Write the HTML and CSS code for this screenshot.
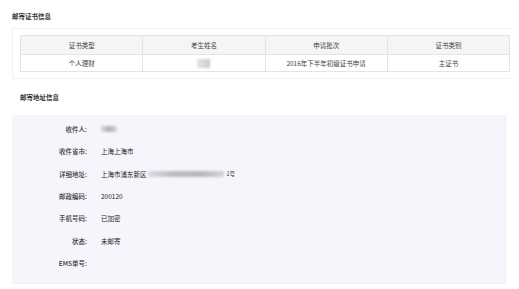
FILE: index.html
```html
<!DOCTYPE html>
<html>
<head>
    <title>邮寄信息</title>
    <link rel="stylesheet" href="styles.css">
</head>
<body>
    <div class="section-title first">邮寄证书信息</div>

    <div class="cert-box">
        <table class="cert-table">
            <tr>
                <th>证书类型</th>
                <th>考生姓名</th>
                <th>申请批次</th>
                <th>证书类别</th>
            </tr>
            <tr>
                <td>个人理财</td>
                <td><span class="blur name-blur"></span></td>
                <td>2016年下半年初级证书申请</td>
                <td>主证书</td>
            </tr>
        </table>
    </div>

    <div class="section-title second">邮寄地址信息</div>

    <div class="address-box">
        <div class="row"><span class="label">收件人:</span><span class="value"><span class="blur person-blur"></span></span></div>
        <div class="row"><span class="label">收件省市:</span><span class="value">上海上海市</span></div>
        <div class="row"><span class="label">详细地址:</span><span class="value">上海市浦东新区<span class="blur addr-blur"></span><span class="tail">1号</span></span></div>
        <div class="row"><span class="label">邮政编码:</span><span class="value">200120</span></div>
        <div class="row"><span class="label">手机号码:</span><span class="value">已加密</span></div>
        <div class="row"><span class="label">状态:</span><span class="value">未邮寄</span></div>
        <div class="row"><span class="label">EMS单号:</span><span class="value"></span></div>
    </div>
</body>
</html>
```

FILE: styles.css
```css
body {
    margin: 0;
    font-family: "Noto Sans CJK SC", "Noto Sans", sans-serif;
    font-size: 6.5px;
    color: #333;
    background: #fff;
}
.section-title {
    font-weight: bold;
    color: #333;
    height: 10px;
    line-height: 10px;
}
.section-title.first {
    margin: 11px 0 0 12px;
}
.section-title.second {
    margin: 13px 0 0 20px;
}
.cert-box {
    margin: 7px 9px 0 12px;
    padding: 6px 0 6px 7px;
    border: 1px solid #f0f0f0;
    border-right: none;
}
.cert-table {
    width: 100%;
    border-collapse: collapse;
    table-layout: fixed;
}
.cert-table th,
.cert-table td {
    border: 1px solid #e4e4e4;
    text-align: center;
    color: #444;
    font-weight: normal;
    padding: 0;
}
.cert-table th {
    background: #f5f5f5;
    height: 18px;
}
.cert-table td {
    height: 16px;
}
.blur {
    display: inline-block;
    vertical-align: middle;
    filter: blur(1px);
}
.name-blur {
    width: 13px;
    height: 9px;
    background: linear-gradient(90deg, #e6e6e6 0%, #d4d4d4 60%, #c8c8c8 100%);
}
.person-blur {
    width: 16px;
    height: 6px;
    background: linear-gradient(90deg, #dcdcdc 0%, #b0b0b0 50%, #d8d8d8 100%);
}
.addr-blur {
    width: 76px;
    height: 6px;
    margin-left: 1px;
    background: linear-gradient(90deg, #dcdce2 0%, #bdbdc3 30%, #b6b6bc 70%, #d4d4da 100%);
}
.tail {
    margin-left: 3px;
    font-size: 5.5px;
}
.address-box {
    margin: 13px 13px 0 12px;
    padding: 3px 0 9px 0;
    background: #f6f5fc;
    border-right: 1px solid #ececf2;
    border-bottom: 1px solid #f0f0f4;
}
.row {
    display: flex;
    align-items: center;
    height: 22.3px;
}
.label {
    width: 75px;
    text-align: right;
    color: #333;
    font-weight: 500;
}
.value {
    margin-left: 14px;
    color: #222;
    display: flex;
    align-items: center;
}
```
